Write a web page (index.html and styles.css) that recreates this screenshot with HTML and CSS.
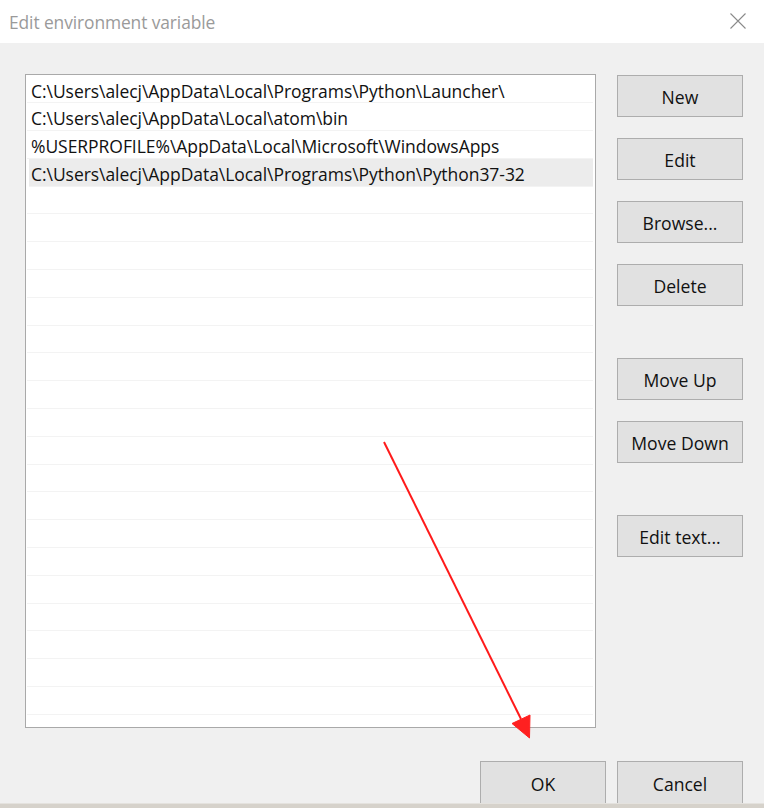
FILE: index.html
```html
<!DOCTYPE html>
<html>
<head>
<meta charset="utf-8">
<link rel="stylesheet" href="styles.css">
</head>
<body>
<div class="window">
  <div class="titlebar">
    <span class="title">Edit environment variable</span>
    <svg class="close" width="16" height="16" viewBox="0 0 16 16"><path d="M0.5 0.5 L15.5 15.5 M15.5 0.5 L0.5 15.5" stroke="#8a8a8a" stroke-width="1.1" fill="none"/></svg>
  </div>
  <div class="body">
    <div class="main">
      <div class="list">
        <div class="row">C:\Users\alecj\AppData\Local\Programs\Python\Launcher\</div>
        <div class="row">C:\Users\alecj\AppData\Local\atom\bin</div>
        <div class="row">%USERPROFILE%\AppData\Local\Microsoft\WindowsApps</div>
        <div class="row selected">C:\Users\alecj\AppData\Local\Programs\Python\Python37-32</div>
        <div class="row"></div><div class="row"></div><div class="row"></div><div class="row"></div>
        <div class="row"></div><div class="row"></div><div class="row"></div><div class="row"></div>
        <div class="row"></div><div class="row"></div><div class="row"></div><div class="row"></div>
        <div class="row"></div><div class="row"></div><div class="row"></div><div class="row"></div>
        <div class="row"></div><div class="row"></div><div class="row"></div>
      </div>
      <div class="side">
        <button class="btn">New</button>
        <button class="btn">Edit</button>
        <button class="btn">Browse...</button>
        <button class="btn">Delete</button>
        <button class="btn far">Move Up</button>
        <button class="btn">Move Down</button>
        <button class="btn far">Edit text...</button>
      </div>
    </div>
    <div class="footer">
      <button class="btn">OK</button>
      <button class="btn">Cancel</button>
    </div>
  </div>
  <div class="strip"></div>
  <svg class="annot" width="764" height="808" viewBox="0 0 764 808">
    <line x1="384" y1="442" x2="521" y2="719" stroke="#ff1a1a" stroke-width="2"/>
    <polygon points="529.5,738 512,723.5 530,715" fill="#ff2020" stroke="#ff2020" stroke-width="1" stroke-linejoin="round"/>
  </svg>
</div>
</body>
</html>
```

FILE: styles.css
```css
* { box-sizing: border-box; }
html, body { margin: 0; padding: 0; }
body {
  width: 764px;
  height: 808px;
  overflow: hidden;
  font-family: "Open Sans", "Noto Sans", sans-serif;
  background: #f0f0f0;
}
.window {
  position: relative;
  width: 764px;
  height: 808px;
  display: flex;
  flex-direction: column;
}
.titlebar {
  height: 43px;
  background: #ffffff;
  display: flex;
  align-items: center;
  justify-content: space-between;
  padding: 0 18px 0 9px;
}
.title {
  font-size: 17.4px;
  color: #9a9a9a;
  letter-spacing: -0.1px;
  margin-top: 0;
}
.close { display: block; margin-top: -1px; }
.body {
  flex: 1;
  background: #f0f0f0;
  display: flex;
  flex-direction: column;
  padding: 31px 21px 0 25px;
}
.main {
  display: flex;
  gap: 21px;
}
.list {
  width: 571px;
  height: 654px;
  background: #ffffff;
  border: 1px solid #a9a9a9;
  padding: 0.5px 2px 0 1px;
  overflow: hidden;
}
.row {
  height: 27.8px;
  border-bottom: 1px solid #f3f3f3;
  padding-left: 4px;
  font-size: 17.5px;
  line-height: 31px;
  color: #111;
  white-space: nowrap;
  letter-spacing: -0.05px;
}
.row.selected {
  background: #ececec;
  margin-left: 2px;
  padding-left: 2px;
}
.side {
  display: flex;
  flex-direction: column;
  gap: 21px;
  padding-top: 1px;
}
.btn {
  width: 126px;
  height: 42px;
  background: #e1e1e1;
  border: 1px solid #adadad;
  font-family: "Open Sans", "Noto Sans", sans-serif;
  font-size: 17.6px;
  color: #111;
  padding: 2px 0 0 0;
  margin: 0;
}
.btn.far { margin-top: 31px; }
.footer {
  display: flex;
  justify-content: flex-end;
  gap: 11px;
  margin-top: 33px;
}
.footer .btn { height: 43px; }
.strip {
  position: absolute;
  left: 0;
  bottom: 0;
  width: 764px;
  height: 5px;
  background: #d6d2cb;
  border-top: 1px solid #e4e2de;
}
.annot {
  position: absolute;
  left: 0;
  top: 0;
  pointer-events: none;
}
```
